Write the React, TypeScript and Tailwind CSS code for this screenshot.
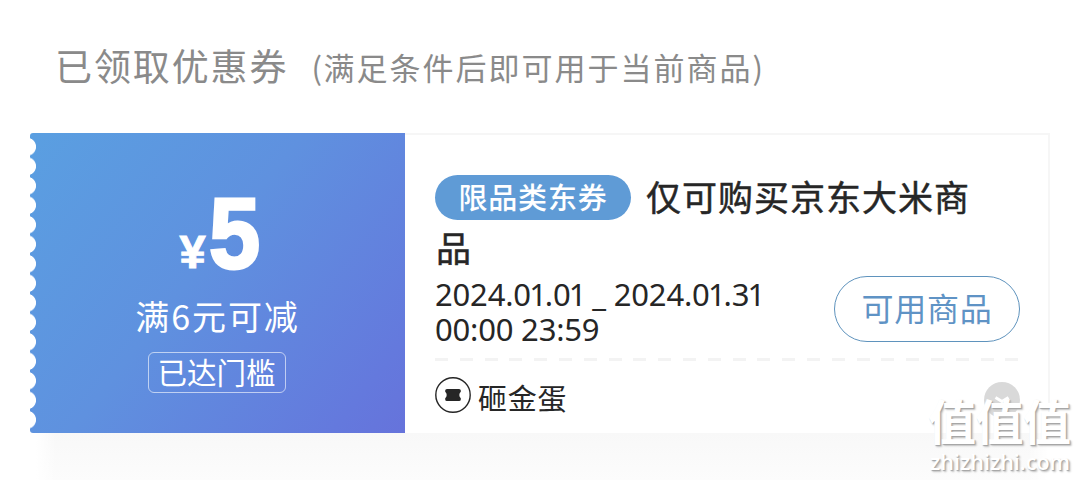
import React from 'react';

const Watermark = () => (
  <div className="absolute left-[928px] top-[389px] w-[150px] whitespace-nowrap text-white [text-shadow:1px_1px_1px_#a3a3a3,2px_2px_2px_#c4c4c4]">
    <div className="h-[60px] text-[48px] font-bold leading-[60px] tracking-[-0.5px]">值值值</div>
    <div className="h-[26px] pl-[2px] font-['Open_Sans','Noto_Sans',sans-serif] text-[21.5px] font-semibold leading-[26px]">zhizhizhi.com</div>
  </div>
);

const TicketIcon = () => (
  <svg className="block h-9 w-9" viewBox="0 0 36 36">
    <circle cx="18" cy="18" r="17.2" fill="none" stroke="#262626" strokeWidth="1.4" />
    <path d="M12 12h12q1.800 0 1.800 1.500v1.300q-1.500 1.200-1.500 3.200t1.500 3.200v1.300q0 1.500-1.800 1.500h-12q-1.800 0-1.800-1.500v-1.300q1.500-1.200 1.500-3.200t-1.500-3.200v-1.300q0-1.500 1.800-1.500z" fill="#262626" />
  </svg>
);

// Draws the digit 1 on a narrower advance than the other digits.
const Figures = ({ text }: { text: string }) => (
  <>
    {text.split('').map((c, i) =>
      c === '1' ? (
        <span key={i} className="ml-[-1.7px] tracking-[-2.1px]">1</span>
      ) : (
        c
      ),
    )}
  </>
);

const AmountPanel = () => (
  <div className="relative flex h-[300px] w-[375px] flex-col items-center rounded-l-[3px] bg-[linear-gradient(128deg,#5a9fe1_0%,#5f91df_45%,#6479dd_88%,#6673db_100%)] pr-[2px] text-white">
    <div className="absolute left-0 top-[3.75px] h-[292.5px] w-[7px] bg-[radial-gradient(circle_at_-3px_9.75px,#fff_8.6px,transparent_9.4px)] bg-[length:7px_19.5px]" />
    <div className="ml-[11px] mt-[50px] flex h-[100px] items-end font-['Liberation_Sans',sans-serif] font-bold leading-[100px]">
      <span className="mr-[3px] text-[47px] leading-[63px] [-webkit-text-stroke:1px_#fff]">¥</span>
      <span className="origin-left scale-x-[0.92] text-[100px] [-webkit-text-stroke:3px_#fff]">5</span>
    </div>
    <div className="mt-[13px] h-[40px] pl-[2px] text-[34px] leading-[40px] tracking-[1.9px]">满6元可减</div>
    <div className="mt-[16px] flex h-[41px] w-[138px] items-center justify-center rounded-[6px] border border-white/60 pb-[3px] text-[29.5px] leading-[38px]">已达门槛</div>
  </div>
);

const Details = () => (
  <div className="h-[300px] w-[645px] border-r-2 border-t-2 border-[#f6f6f6] pl-[30px] pr-[28px] text-[#262626]">
    <div className="mt-[36px] flex h-[52px] items-center">
      <div className="flex h-[45px] w-[196px] items-center justify-center rounded-full bg-[#5f9bd6] text-[29px] font-medium tracking-[0.8px] text-white">限品类东券</div>
      <div className="ml-[15px] whitespace-nowrap pb-[2px] text-[35px] tracking-[1px] [-webkit-text-stroke:0.5px_#262626]">仅可购买京东大米商</div>
    </div>
    <div className="h-[51px] pl-px text-[35px] leading-[48px] [-webkit-text-stroke:0.5px_#262626]">品</div>
    <div className="flex h-[82px] items-start justify-between">
      <div className="mt-[3px] whitespace-nowrap font-['Noto_Sans',sans-serif] text-[31px] leading-[35px] tracking-[-0.2px]">
        <Figures text="2024.01.01 _ 2024.01.31" />
        <br />
        00:00 23:59
      </div>
      <div className="mt-[2px] flex h-[66px] w-[186px] items-center justify-center rounded-full border border-[#5f93bd] pb-[4px] text-[32px] tracking-[0.8px] text-[#5f93c5]">可用商品</div>
    </div>
    <div className="mt-[2px] h-[3px] w-[585px] bg-[repeating-linear-gradient(90deg,#f3f3f3_0px,#f3f3f3_13px,transparent_13px,transparent_24.8px)]" />
    <div className="mt-[16px] flex h-10 items-start justify-between">
      <div className="flex items-start">
        <TicketIcon />
        <span className="ml-[7px] text-[29px] leading-[40px] tracking-[0.8px]">砸金蛋</span>
      </div>
      <svg className="mt-[5px] h-9 w-9" viewBox="0 0 36 36">
        <circle cx="18" cy="18" r="18" fill="#d9d9d9" />
        <path d="M11.500 15.500l6.500 4 6.500-4" fill="none" stroke="#fff" strokeWidth="3" />
      </svg>
    </div>
  </div>
);

export default function App() {
  return (
    <main className="relative h-[480px] w-[1080px] overflow-hidden bg-white font-['Noto_Sans_CJK_SC',sans-serif]">
      <header className="flex h-[133px] items-start whitespace-nowrap pl-[55px] text-[#8a8a8a]">
        <h1 className="mt-[38px] text-[37px] leading-[54px] tracking-[1.9px]">已领取优惠券</h1>
        <p className="ml-[23px] mt-[42px] text-[31px] leading-[50px] tracking-[2px]">
          <span className="tracking-[1.5px]">(</span>满足条件后即可用于当前商品<span>)</span>
        </p>
      </header>
      <section className="ml-[30px] flex h-[300px] w-[1020px]">
        <AmountPanel />
        <Details />
      </section>
      <div className="ml-[36px] h-[47px] w-[1012px] bg-[linear-gradient(90deg,#fff,transparent_20px,transparent_992px,#fff),linear-gradient(180deg,#f8f8f8,#fcfcfc)]" />
      <Watermark />
    </main>
  );
}
